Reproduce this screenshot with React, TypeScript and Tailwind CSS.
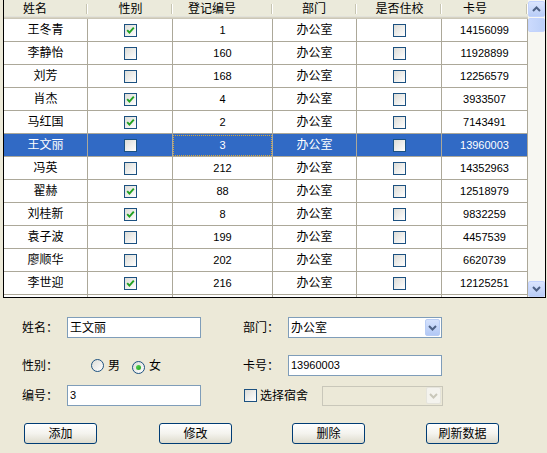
import React from "react"

type Row = { name: string; male: boolean; no: string; dept: string; live: boolean; card: string }

const rows: Row[] = [
  { name: "王冬青", male: true, no: "1", dept: "办公室", live: false, card: "14156099" },
  { name: "李静怡", male: false, no: "160", dept: "办公室", live: false, card: "11928899" },
  { name: "刘芳", male: false, no: "168", dept: "办公室", live: false, card: "12256579" },
  { name: "肖杰", male: true, no: "4", dept: "办公室", live: false, card: "3933507" },
  { name: "马红国", male: true, no: "2", dept: "办公室", live: false, card: "7143491" },
  { name: "王文丽", male: false, no: "3", dept: "办公室", live: false, card: "13960003" },
  { name: "冯英", male: false, no: "212", dept: "办公室", live: false, card: "14352963" },
  { name: "翟赫", male: true, no: "88", dept: "办公室", live: false, card: "12518979" },
  { name: "刘桂新", male: true, no: "8", dept: "办公室", live: false, card: "9832259" },
  { name: "袁子波", male: false, no: "199", dept: "办公室", live: false, card: "4457539" },
  { name: "廖顺华", male: false, no: "202", dept: "办公室", live: false, card: "6620739" },
  { name: "李世迎", male: true, no: "216", dept: "办公室", live: false, card: "12125251" },
]

const SELECTED = 5

const colW = ["w-[84px]", "w-[85px]", "w-[100px]", "w-[84px]", "w-[85px]", "w-[86px]"]
const headPad = ["pr-[22px]", "", "pr-[22px]", "pr-[2px]", "", "pr-[20px]"]
const heads = ["姓名", "性别", "登记编号", "部门", "是否住校", "卡号"]

const cell = "flex h-[23px] shrink-0 items-center justify-center border-r border-b border-[#aca899]"

function Check({ on }: { on: boolean }) {
  return (
    <span className="inline-flex h-[13px] w-[13px] items-center justify-center border border-[#1c5180] bg-linear-to-br from-[#dcdcd7] to-white">
      {on && (
        <svg width="9" height="9" viewBox="0 0 9 9">
          <path d="M1.2 4.2 L3.4 6.6 L7.8 1.6" stroke="#21a121" strokeWidth="1.9" fill="none" />
        </svg>
      )}
    </span>
  )
}

function Radio({ on }: { on: boolean }) {
  return (
    <span className="inline-flex h-[13px] w-[13px] items-center justify-center rounded-full border border-[#1c5180] bg-linear-to-br from-[#dcdcd7] to-white">
      {on && <span className="h-[5px] w-[5px] rounded-full bg-linear-to-br from-[#55d751] to-[#21a121]" />}
    </span>
  )
}

function Chevron({ up, color = "#4d6185" }: { up?: boolean; color?: string }) {
  return (
    <svg width="9" height="6" viewBox="0 0 9 6">
      <path d={up ? "M1 5 L4.5 1.5 L8 5" : "M1 1 L4.5 4.5 L8 1"} stroke={color} strokeWidth="2" fill="none" />
    </svg>
  )
}

function DropBtn({ disabled }: { disabled?: boolean }) {
  return (
    <span
      className={
        disabled
          ? "flex h-[17px] w-[15px] items-center justify-center rounded-[2px] border border-[#e5e4dc] bg-[#f4f3ee]"
          : "flex h-[17px] w-[15px] items-center justify-center rounded-[2px] border border-[#b9cdf5] bg-linear-to-b from-[#d5e2fd] to-[#b2c8f5]"
      }
    >
      <Chevron color={disabled ? "#c9c7ba" : "#4d6185"} />
    </span>
  )
}

function Button({ label }: { label: string }) {
  return (
    <button className="flex h-[21px] w-[73px] items-center justify-center rounded-[3px] border border-[#003c74] bg-linear-to-b from-white via-[#f4f3ee] to-[#dedbcd] text-[12px] text-black">
      {label}
    </button>
  )
}

export default function App() {
  return (
    <div className="h-[453px] w-[547px] overflow-hidden bg-[#ece9d8] font-['Liberation_Sans','Noto_Sans_CJK_SC',sans-serif] text-[12px] text-black">
      {/* data grid */}
      <div className="ml-[3px] flex h-[298px] w-[543px] border-x border-b border-black bg-white">
        <div className="flex-1 overflow-hidden">
          <div className="flex h-[19px] bg-[#ebeadb] shadow-[inset_0_-1px_0_#cbc7b8,inset_0_-2px_0_#d6d2c2,inset_0_-3px_0_#e2e2da]">
            {heads.map((h, i) => (
              <div key={h} className={`relative flex items-center justify-center pb-[2px] ${colW[i]} ${headPad[i]}`}>
                {h}
                <span className="absolute top-[4px] right-[1px] bottom-[5px] w-px bg-[#c7c5b2]" />
                <span className="absolute top-[4px] right-0 bottom-[5px] w-px bg-white" />
              </div>
            ))}
          </div>
          {rows.map((r, i) => {
            const sel = i === SELECTED
            return (
              <div key={r.name} className={sel ? "flex bg-[#316ac5] text-white" : "flex"}>
                <div className={`${cell} ${colW[0]}`}>{r.name}</div>
                <div className={`${cell} ${colW[1]}`}>
                  <Check on={r.male} />
                </div>
                <div className={`${cell} ${colW[2]} text-[11px]`}>
                  {sel ? (
                    <span className="flex h-[21px] w-full items-center justify-center border border-dotted border-[#d8a93a]">
                      {r.no}
                    </span>
                  ) : (
                    r.no
                  )}
                </div>
                <div className={`${cell} ${colW[3]}`}>{r.dept}</div>
                <div className={`${cell} ${colW[4]}`}>
                  <Check on={r.live} />
                </div>
                <div className={`${cell} ${colW[5]} text-[11px]`}>{r.card}</div>
              </div>
            )
          })}
          {/* next row, scrolled out of view */}
          <div className="flex">
            {colW.map((w, i) => (
              <div key={i} className={`${cell} ${w}`} />
            ))}
          </div>
        </div>
        {/* scrollbar */}
        <div className="flex w-[17px] flex-col bg-[#f7f7f2]">
          <div className="mt-px flex h-[16px] items-center justify-center rounded-[2px] border border-[#c3d3fd] bg-linear-to-b from-[#dbe5fe] to-[#b9cdf7]">
            <Chevron up />
          </div>
          <div className="mt-px h-[14px] rounded-[2px] border border-[#c3d3fd] bg-linear-to-r from-[#cbdafd] to-[#bcd0f8]" />
          <div className="flex-1" />
          <div className="flex h-[16px] items-center justify-center rounded-[2px] border border-[#c3d3fd] bg-linear-to-b from-[#dbe5fe] to-[#b9cdf7]">
            <Chevron />
          </div>
        </div>
      </div>

      {/* form */}
      <div className="pl-[22px]">
        <div className="mt-[19px] flex h-[21px] items-center">
          <span className="w-[45px]">姓名：</span>
          <div className="flex h-[21px] w-[134px] items-center border border-[#7f9db9] bg-white pl-[2px]">王文丽</div>
          <span className="ml-[42px] w-[45px]">部门：</span>
          <div className="flex h-[21px] w-[154px] items-center justify-between border border-[#7f9db9] bg-white pr-px pl-[2px]">
            <span>办公室</span>
            <DropBtn />
          </div>
        </div>

        <div className="mt-[17px] flex h-[21px] items-center">
          <span className="w-[45px]">性别：</span>
          <div className="flex w-[134px] items-center pl-[24px]">
            <Radio on={false} />
            <span className="ml-[4px]">男</span>
            <span className="ml-[12px]">
              <Radio on />
            </span>
            <span className="ml-[4px]">女</span>
          </div>
          <span className="ml-[42px] w-[45px]">卡号：</span>
          <div className="flex h-[21px] w-[154px] items-center border border-[#7f9db9] bg-white pl-[2px] text-[11px]">13960003</div>
        </div>

        <div className="mt-[9px] flex h-[21px] items-center">
          <span className="w-[45px]">编号：</span>
          <div className="flex h-[21px] w-[134px] items-center border border-[#7f9db9] bg-white pl-[2px] text-[11px]">3</div>
          <span className="ml-[43px] flex items-center">
            <Check on={false} />
          </span>
          <span className="ml-[3px] w-[62px]">选择宿舍</span>
          <div className="flex h-[20px] w-[121px] items-center justify-end border border-[#c9c7ba] bg-[#ece9d8] pr-px">
            <DropBtn disabled />
          </div>
        </div>

        <div className="mt-[17px] ml-[2px] flex items-center">
          <Button label="添加" />
          <span className="ml-[62px]">
            <Button label="修改" />
          </span>
          <span className="ml-[60px]">
            <Button label="删除" />
          </span>
          <span className="ml-[61px]">
            <Button label="刷新数据" />
          </span>
        </div>
      </div>
    </div>
  )
}
